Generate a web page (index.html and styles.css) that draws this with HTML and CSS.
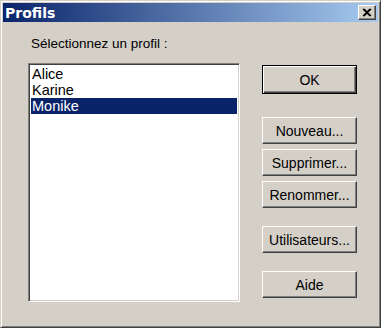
FILE: index.html
```html
<!DOCTYPE html>
<html>
<head>
  <meta charset="UTF-8">
  <title>Profils</title>
  <link rel="stylesheet" href="styles.css">
</head>
<body>
  <div class="window">
    <div class="titlebar">
      <span class="title">Profils</span>
      <span class="close-btn">
        <svg width="10" height="9" viewBox="0 0 10 9">
          <path d="M1 1 L8 8 M2 1 L9 8 M8 1 L1 8 M9 1 L2 8" stroke="#000" stroke-width="1.3" fill="none"/>
        </svg>
      </span>
    </div>
    <div class="content">
      <div class="left-col">
        <div class="label">Sélectionnez un profil :</div>
        <ul class="listbox">
          <li>Alice</li>
          <li>Karine</li>
          <li class="selected">Monike</li>
        </ul>
      </div>
      <div class="right-col">
        <button class="btn btn-default">OK</button>
        <button class="btn btn-nouveau">Nouveau...</button>
        <button class="btn btn-near">Supprimer...</button>
        <button class="btn btn-near">Renommer...</button>
        <button class="btn btn-far">Utilisateurs...</button>
        <button class="btn btn-far">Aide</button>
      </div>
    </div>
  </div>
</body>
</html>
```

FILE: styles.css
```css
/* Page */
body {
  margin: 0;
  background-color: #fff;
  font-family: "Liberation Sans", Arial, sans-serif;
}
/* Dialog window frame */
.window {
  width: 381px;
  height: 328px;
  box-sizing: border-box;
  background-color: #d4d0c8;
  border: 1px solid;
  border-color: #d4d0c8 #404040 #404040 #d4d0c8;
  box-shadow: inset 1px 1px #fff, inset -1px -1px #808080;
  padding: 2px;
}
/* Title bar */
.titlebar {
  height: 19px;
  display: flex;
  align-items: center;
  justify-content: space-between;
  padding: 0 2px 0 2px;
  background: linear-gradient(to right, #0a246a, #a6caf0);
}
.title {
  color: #fff;
  font-family: "DejaVu Sans", Verdana, sans-serif;
  font-weight: bold;
  font-size: 14px;
}
.close-btn {
  width: 18px;
  height: 15px;
  box-sizing: border-box;
  display: flex;
  align-items: center;
  justify-content: center;
  background-color: #d4d0c8;
  border: 1px solid;
  border-color: #fff #404040 #404040 #fff;
  box-shadow: inset -1px -1px #808080;
}
/* Dialog content */
.content {
  display: flex;
  padding: 14px 0 0 25px;
}
.left-col {
  width: 212px;
}
.label {
  font-size: 13.5px;
  line-height: 15px;
  padding-left: 3px;
  color: #000;
}
.listbox {
  list-style: none;
  margin: 12px 0 0 0;
  padding: 2px;
  width: 212px;
  height: 239px;
  box-sizing: border-box;
  background-color: #fff;
  border: 1px solid;
  border-color: #808080 #fff #fff #808080;
  box-shadow: inset 1px 1px #404040, inset -1px -1px #d4d0c8;
}
.listbox li {
  height: 16px;
  line-height: 16px;
  font-size: 14.5px;
  padding-left: 1px;
  color: #000;
}
.listbox li.selected {
  background-color: #0a246a;
  color: #fff;
}
/* Buttons column */
.right-col {
  display: flex;
  flex-direction: column;
  margin-left: 22px;
  padding-top: 29px;
}
.btn {
  width: 95px;
  height: 27px;
  box-sizing: border-box;
  font-family: "Liberation Sans", Arial, sans-serif;
  font-size: 14px;
  color: #000;
  background-color: #d4d0c8;
  border: 1px solid;
  border-color: #fff #404040 #404040 #fff;
  box-shadow: inset -1px -1px #808080;
  padding: 0;
}
.btn-default {
  height: 29px;
  border: 1px solid #000;
  box-shadow: inset 1px 1px #fff, inset -1px -1px #404040, inset -2px -2px #808080;
}
.btn-nouveau {
  margin-top: 23px;
}
.btn-near {
  margin-top: 5px;
}
.btn-far {
  margin-top: 18px;
}
```
